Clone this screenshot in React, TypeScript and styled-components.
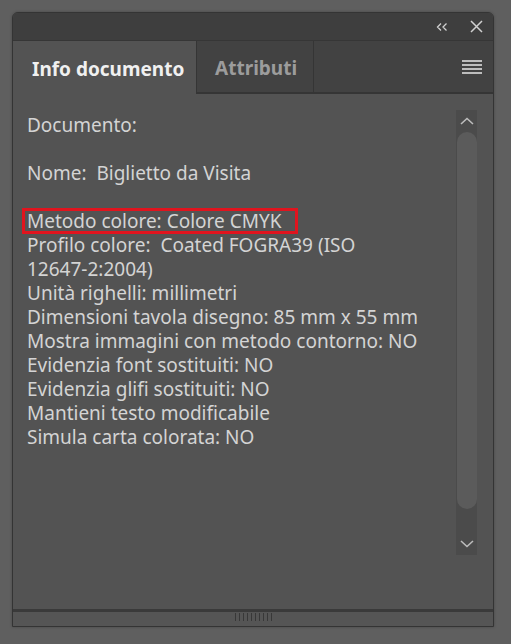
import React from "react";
import styled, { createGlobalStyle } from "styled-components";

const GlobalStyle = createGlobalStyle`
  html, body { margin: 0; padding: 0; background: #5f5f5f; }
  body { font-family: "Noto Sans", "Open Sans", sans-serif; }
`;

const Page = styled.div`
  padding: 12px 0 0 12px;
  height: 644px;
  box-sizing: border-box;
`;

const Panel = styled.div`
  width: 482px;
  height: 615px;
  box-sizing: border-box;
  border: 1px solid #343434;
  border-radius: 6px 6px 0 0;
  overflow: hidden;
  display: flex;
  flex-direction: column;
  background: #535353;
  box-shadow: 0 0 3px rgba(0, 0, 0, 0.25);
`;

const TitleBar = styled.div`
  height: 27px;
  flex: none;
  background: #3e3e3e;
  display: flex;
  align-items: center;
  justify-content: flex-end;
  gap: 22px;
  padding-right: 10px;
  border-bottom: 1px solid #363636;
`;

const IconButton = styled.div`
  display: flex;
  align-items: center;
  justify-content: center;
  color: #d0d0d0;
`;

const TabRow = styled.div`
  height: 53px;
  flex: none;
  display: flex;
  background: #424242;
`;

const Tab = styled.div<{ $active?: boolean }>`
  display: flex;
  align-items: center;
  box-sizing: border-box;
  padding: 2px 0 0 ${(p) => (p.$active ? "19px" : "18px")};
  width: ${(p) => (p.$active ? "184px" : "117px")};
  font-size: 19px;
  font-weight: 700;
  color: ${(p) => (p.$active ? "#f0f0f0" : "#9c9c9c")};
  background: ${(p) => (p.$active ? "#535353" : "#424242")};
  border-right: 1px solid #353535;
  border-bottom: ${(p) => (p.$active ? "none" : "2px solid #353535")};
`;

const TabFiller = styled.div`
  flex: 1;
  display: flex;
  align-items: center;
  justify-content: flex-end;
  padding-right: 11px;
  border-bottom: 2px solid #353535;
`;

const Content = styled.div`
  flex: 1;
  display: flex;
  min-height: 0;
`;

const TextArea = styled.div`
  flex: 1;
  padding: 19px 0 0 14px;
  font-size: 19px;
  line-height: 24px;
  color: #d4d4d4;
`;

const Line = styled.div`
  white-space: pre;
  min-height: 24px;
`;

const Highlight = styled.span`
  display: inline-block;
  margin: -2px 0 -2px -5px;
  padding: 0 14px 0 2px;
  border: 3px solid #e0141e;
  line-height: 20px;
`;

const ScrollBar = styled.div`
  width: 21px;
  margin: 16px 16px 54px 0;
  background: #4b4b4b;
  display: flex;
  flex-direction: column;
  align-items: center;
`;

const ScrollArrow = styled.div`
  height: 22px;
  flex: none;
  display: flex;
  align-items: center;
  justify-content: center;
  color: #bcbcbc;
`;

const ScrollThumb = styled.div`
  width: 20px;
  flex: 1;
  margin-bottom: 24px;
  background: #5b5b5b;
  border-radius: 10px;
`;

const Footer = styled.div`
  height: 13px;
  flex: none;
  border-top: 3px solid #3a3a3a;
  background: #555555;
  display: flex;
  justify-content: center;
  padding-top: 1px;
  box-sizing: content-box;
`;

const Gripper = styled.div`
  display: flex;
  gap: 3px;
  height: 8px;
`;

const GripLine = styled.span`
  width: 1px;
  height: 8px;
  background: #383838;
`;

const lines: (string | null)[] = [
  "Documento:",
  "",
  "Nome:  Biglietto da Visita",
  "",
  null,
  "Profilo colore:  Coated FOGRA39 (ISO",
  "12647-2:2004)",
  "Unità righelli: millimetri",
  "Dimensioni tavola disegno: 85 mm x 55 mm",
  "Mostra immagini con metodo contorno: NO",
  "Evidenzia font sostituiti: NO",
  "Evidenzia glifi sostituiti: NO",
  "Mantieni testo modificabile",
  "Simula carta colorata: NO",
];

export default function App() {
  return (
    <>
      <GlobalStyle />
      <Page>
        <Panel>
          <TitleBar>
            <IconButton>
              <svg width="12" height="10" viewBox="0 0 12 10" fill="none" stroke="#d0d0d0" strokeWidth="1.3">
                <path d="M5 1.5 L1.5 5 L5 8.5 M10.5 1.5 L7 5 L10.5 8.5" />
              </svg>
            </IconButton>
            <IconButton>
              <svg width="13" height="13" viewBox="0 0 13 13" fill="none" stroke="#d0d0d0" strokeWidth="1.5">
                <path d="M1 1 L12 12 M12 1 L1 12" />
              </svg>
            </IconButton>
          </TitleBar>
          <TabRow>
            <Tab $active>Info documento</Tab>
            <Tab>Attributi</Tab>
            <TabFiller>
              <svg width="20" height="14" viewBox="0 0 20 14" fill="#bdbdbd">
                <rect x="0" y="0" width="20" height="2" />
                <rect x="0" y="4" width="20" height="2" />
                <rect x="0" y="8" width="20" height="2" />
                <rect x="0" y="12" width="20" height="2" />
              </svg>
            </TabFiller>
          </TabRow>
          <Content>
            <TextArea>
              {lines.map((l, i) =>
                l === null ? (
                  <Line key={i}>
                    <Highlight>Metodo colore: Colore CMYK</Highlight>
                  </Line>
                ) : (
                  <Line key={i}>{l}</Line>
                )
              )}
            </TextArea>
            <ScrollBar>
              <ScrollArrow>
                <svg width="14" height="8" viewBox="0 0 14 8" fill="none" stroke="#bcbcbc" strokeWidth="1.6">
                  <path d="M1 7 L7 1.5 L13 7" />
                </svg>
              </ScrollArrow>
              <ScrollThumb />
              <ScrollArrow>
                <svg width="14" height="8" viewBox="0 0 14 8" fill="none" stroke="#bcbcbc" strokeWidth="1.6">
                  <path d="M1 1 L7 6.5 L13 1" />
                </svg>
              </ScrollArrow>
            </ScrollBar>
          </Content>
          <Footer>
            <Gripper>
              {Array.from({ length: 10 }).map((_, i) => (
                <GripLine key={i} />
              ))}
            </Gripper>
          </Footer>
        </Panel>
      </Page>
    </>
  );
}
